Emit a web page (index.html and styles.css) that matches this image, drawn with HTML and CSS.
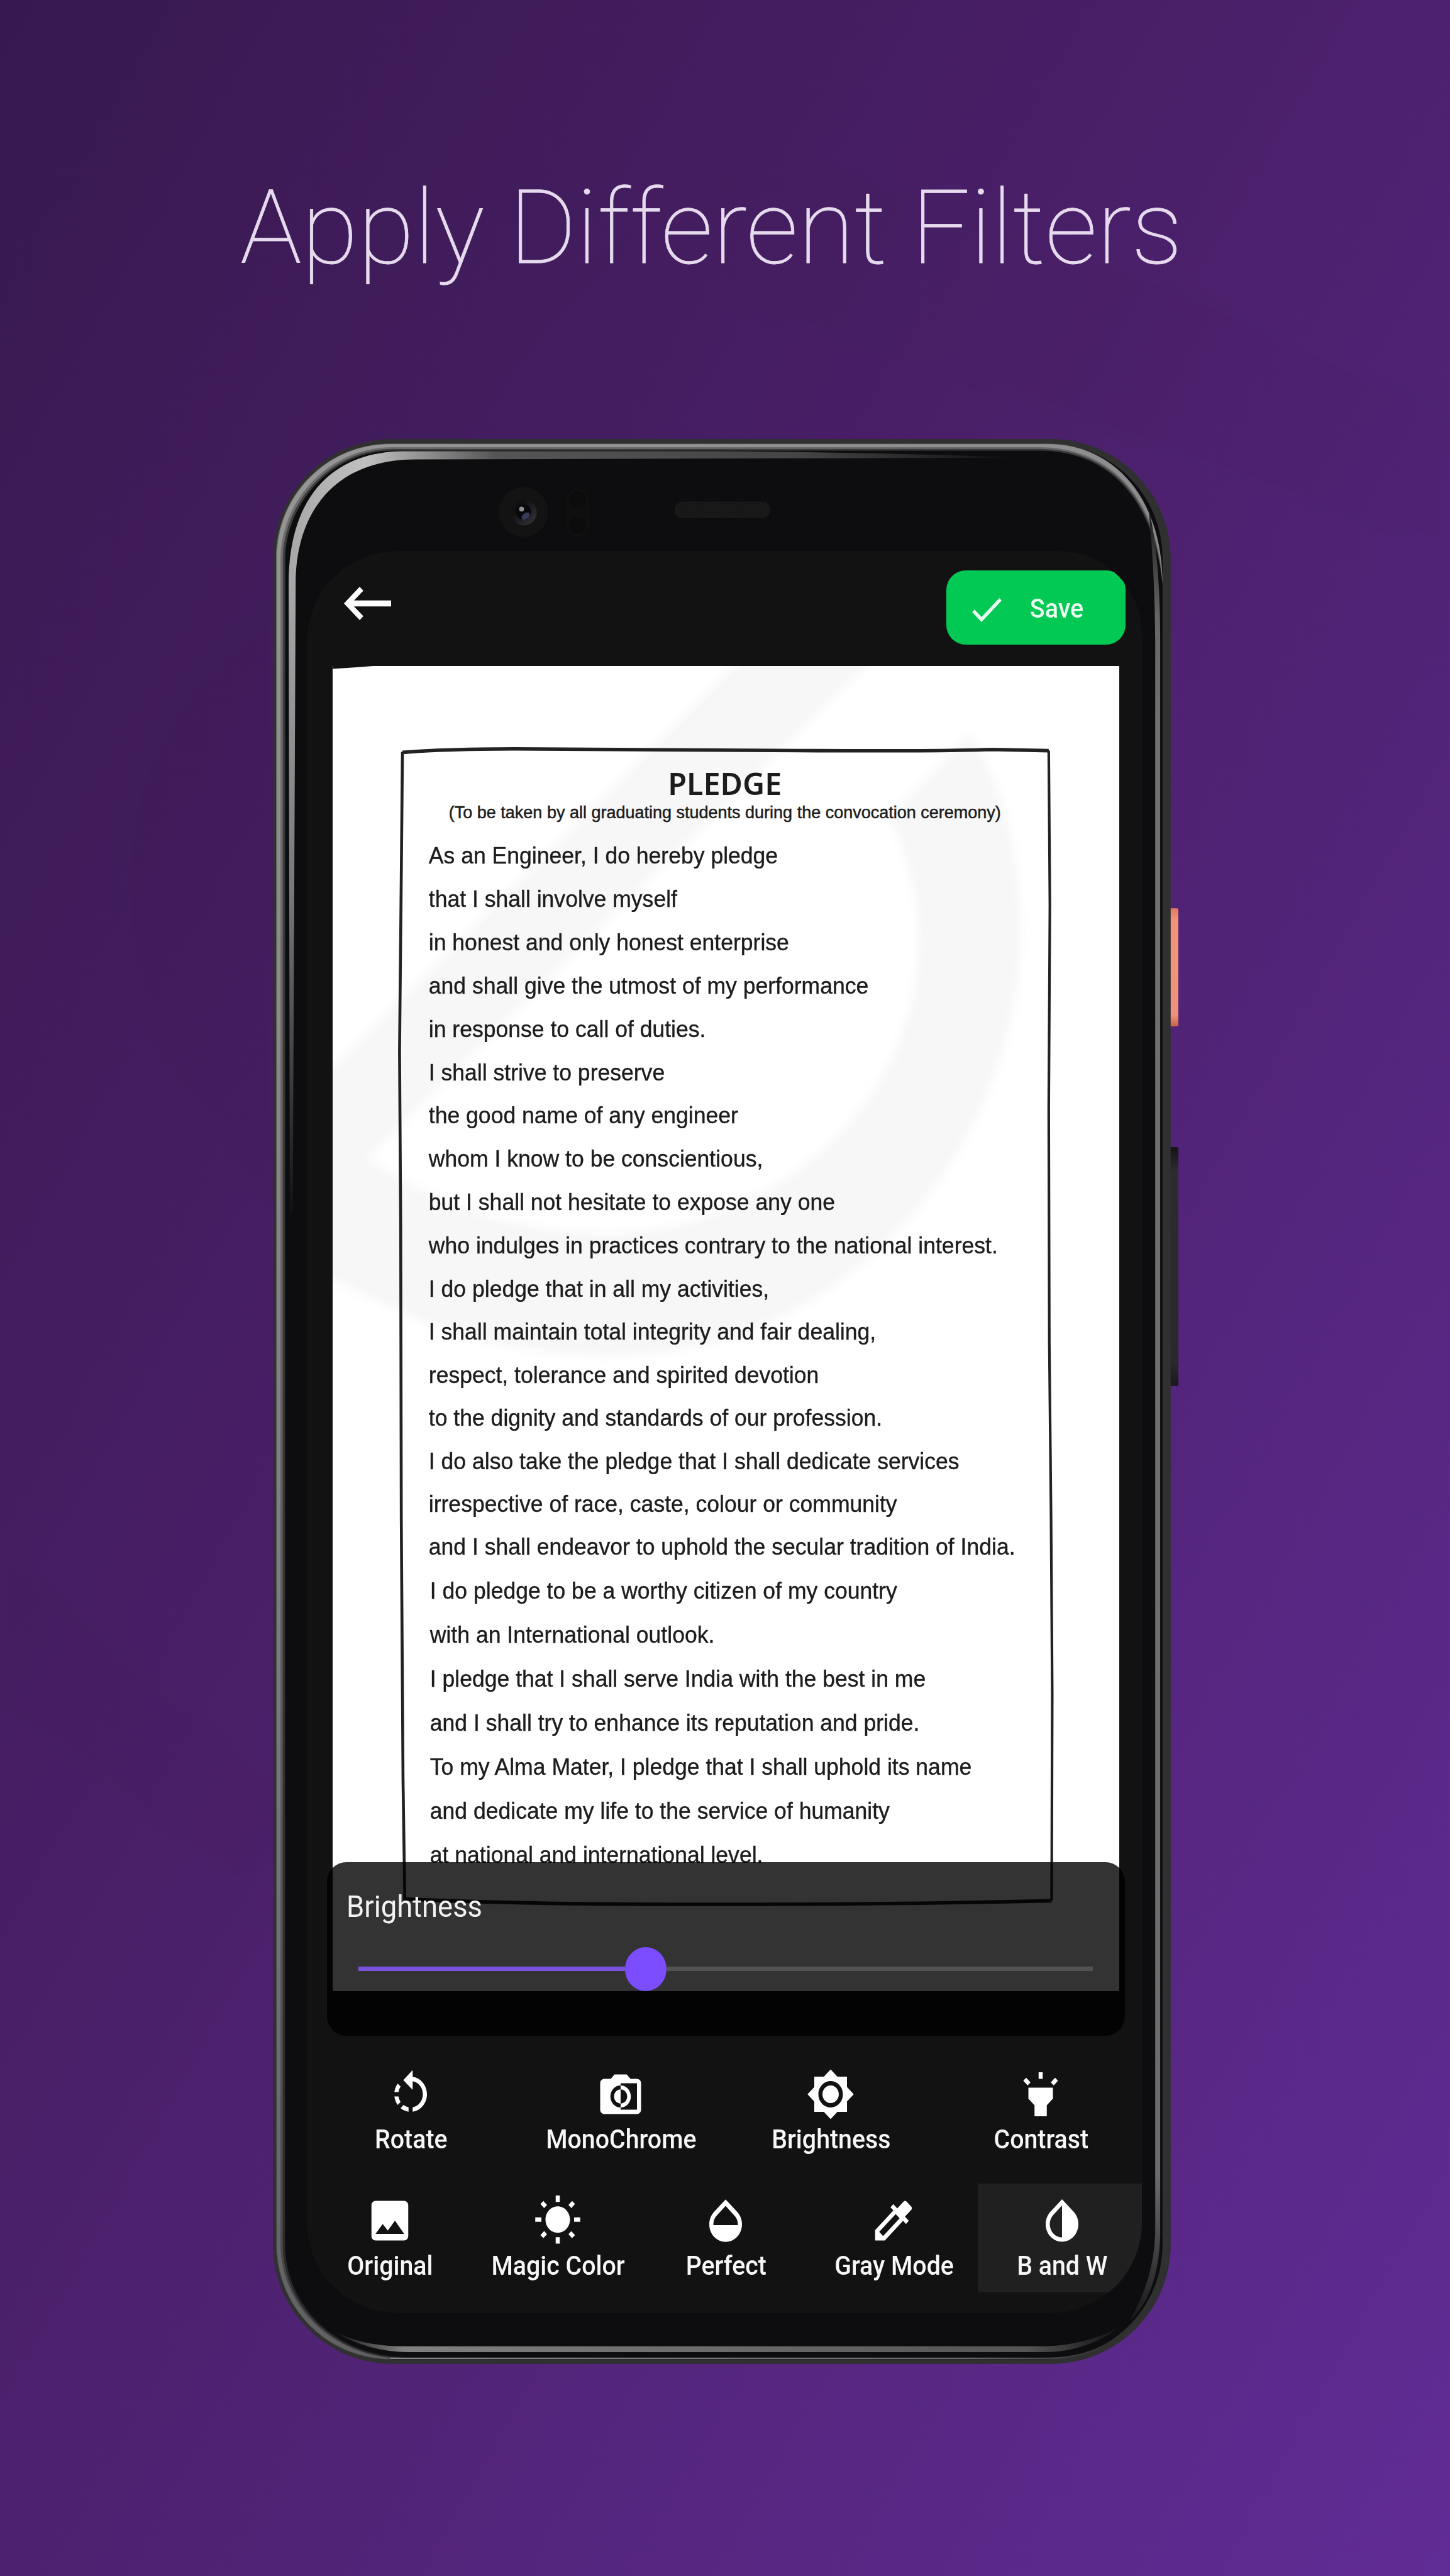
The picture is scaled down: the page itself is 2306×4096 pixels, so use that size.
FILE: index.html
```html
<!DOCTYPE html>
<html lang="en">
<head>
<meta charset="utf-8">
<title>Apply Different Filters</title>
<link rel="stylesheet" href="styles.css">
</head>
<body>
<svg class="backdrop" viewBox="0 0 883 1568" preserveAspectRatio="none" aria-hidden="true">
  <defs><filter id="haze"><feGaussianBlur stdDeviation="5"/></filter></defs>
  <g filter="url(#haze)">
    <path fill="#000" fill-opacity=".018" fill-rule="evenodd" d="M440 90L110 420C40 520 70 650 190 760V1100L150 1150L0 1040V940L170 1085V330Z"/>
    <path fill="#000" fill-opacity=".014" d="M440 90C600 110 760 190 883 250V335C720 290 560 210 400 180Z"/>
  </g>
</svg>
<h1 class="headline">Apply Different Filters</h1>

<main class="phone">
  <svg class="frame" viewBox="467 752 1552 3297" preserveAspectRatio="none" aria-hidden="true">
    <defs>
      <linearGradient id="rim" gradientUnits="userSpaceOnUse" x1="470" y1="900" x2="2000" y2="3900">
        <stop offset="0" stop-color="#fff" stop-opacity=".9"/>
        <stop offset=".5" stop-color="#fff" stop-opacity=".7"/>
        <stop offset="1" stop-color="#fff" stop-opacity=".4"/>
      </linearGradient>
      <linearGradient id="bottomLine" gradientUnits="userSpaceOnUse" x1="668" y1="0" x2="1900" y2="0">
        <stop offset="0" stop-color="#858585"/><stop offset=".8" stop-color="#666"/><stop offset="1" stop-color="#303030"/>
      </linearGradient>
      <linearGradient id="topBand" gradientUnits="userSpaceOnUse" x1="500" y1="0" x2="1750" y2="0">
        <stop offset="0" stop-color="#a8a8a8"/><stop offset=".1" stop-color="#c0c0c0"/>
        <stop offset=".28" stop-color="#555"/><stop offset=".7" stop-color="#444"/>
        <stop offset="1" stop-color="#0d0d0f"/>
      </linearGradient>
      <linearGradient id="leftBand" x1="0" y1="0" x2="0" y2="1">
        <stop offset="0" stop-color="#a8a8a8"/><stop offset=".5" stop-color="#777"/><stop offset="1" stop-color="#111"/>
      </linearGradient>
      <linearGradient id="rightBand" x1="0" y1="0" x2="0" y2="1">
        <stop offset="0" stop-color="#1a1a1a"/><stop offset=".06" stop-color="#666"/><stop offset=".12" stop-color="#707070"/>
        <stop offset=".92" stop-color="#6c6c6e"/><stop offset="1" stop-color="#18181a"/>
      </linearGradient>
      <linearGradient id="bottomBand" x1="0" y1="0" x2="1" y2="0">
        <stop offset="0" stop-color="#151515"/><stop offset=".09" stop-color="#808080"/>
        <stop offset=".88" stop-color="#555"/><stop offset="1" stop-color="#101012"/>
      </linearGradient>
      <linearGradient id="power" x1="0" y1="0" x2="0" y2="1">
        <stop offset="0" stop-color="#e27a62"/><stop offset=".1" stop-color="#f0937a"/>
        <stop offset=".9" stop-color="#ee937b"/><stop offset="1" stop-color="#c9624b"/>
      </linearGradient>
      <linearGradient id="volume" x1="0" y1="0" x2="0" y2="1">
        <stop offset="0" stop-color="#151515"/><stop offset=".1" stop-color="#2c2c2c"/>
        <stop offset=".9" stop-color="#292929"/><stop offset="1" stop-color="#191919"/>
      </linearGradient>
      <linearGradient id="lens" x1="0" y1="0" x2="1" y2="1">
        <stop offset=".3" stop-color="#101012"/><stop offset="1" stop-color="#36363d"/>
      </linearGradient>
      <pattern id="mesh" width="6" height="6" patternUnits="userSpaceOnUse">
        <rect width="6" height="6" fill="#1b1b1b"/><circle cx="1.5" cy="1.5" r="1.3" fill="#101010"/><circle cx="4.5" cy="4.5" r="1.3" fill="#101010"/>
      </pattern>
    </defs>
    <rect x="2000" y="1556" width="19" height="202" rx="4" fill="url(#power)"/>
    <rect x="2000" y="1965" width="19" height="409" rx="4" fill="url(#volume)"/>
    <rect x="467" y="752" width="1538" height="3297" rx="205" fill="#303030"/>
    <rect x="472.5" y="760" width="1518.5" height="3281" rx="196" fill="#0d0d0f"/>
    <g fill="url(#rim)">
      <path fill-opacity=".22" d="M1795 760H668C560 760 472.5 848 472.5 956V3845C472.5 3953 560 4041 668 4041L690 4037C576 4035 488 3950 488 3845V960C488 860 570 772 672 772H1780C1895 772 1975 850 1991 1000C1991 848 1903 760 1795 760Z"/>
      <path fill-opacity=".28" d="M1795 760H668C560 760 472.5 848 472.5 956V3845C472.5 3953 560 4041 668 4041L690 4039C572 4037 484 3950 484 3845V960C484 858 568 769 672 769H1780C1897 769 1979 850 1991 1000C1991 848 1903 760 1795 760Z"/>
      <path fill-opacity=".3" d="M1795 761H668C560 761 474 848 474 956V3845C474 3953 560 4040 668 4040L690 4040C570 4039 480 3950 480 3845V960C480 856 564 766 672 766H1780C1899 766 1983 850 1991 1000C1990 848 1903 761 1795 761Z"/>
    </g>
    <path fill="none" stroke="url(#bottomLine)" stroke-width="2.6" d="M668 4039.5H1795Q1850 4039 1890 4018"/>
    <path fill="url(#topBand)" d="M494 1000C494 850 570 774 690 773H1240Q1500 775 1765 784L1240 785.5L710 787C580 787 506 870 506 1000Z"/>
    <path fill="url(#leftBand)" d="M494 999H506L501 2080H496Z"/>
    <path fill="url(#rightBand)" d="M1967 870Q1987 950 1987 1100V3830Q1984 3930 1935 3975Q1978 3900 1978.5 3820V1100Q1978 980 1967 870Z"/>
    <path fill="url(#bottomBand)" d="M569 3992Q620 4019 690 4019H1790Q1860 4017 1920 3985Q1860 4029 1790 4029H700Q630 4029 569 3992Z"/>
    <circle cx="896" cy="877" r="42.5" fill="#131313"/>
    <circle cx="897" cy="878" r="22" fill="url(#lens)"/>
    <circle cx="896" cy="877" r="13" fill="#08080a"/>
    <ellipse cx="900" cy="884" rx="8" ry="5" fill="#343a58" transform="rotate(-35 900 884)"/>
    <circle cx="893" cy="872" r="4.2" fill="#8d8d8d"/>
    <rect x="971" y="838" width="36" height="80" rx="18" fill="#0f0f10" stroke="#141414"/>
    <circle cx="989" cy="855" r="14" fill="#0c0c0d"/><circle cx="989" cy="900" r="14" fill="#0c0c0d"/>
    <rect x="1156" y="860" width="162" height="27" rx="12" fill="url(#mesh)" stroke="#1c1c1c"/>
  </svg>

  <div class="screen">
    <header class="appbar">
      <svg class="back" viewBox="3 6 18 12" preserveAspectRatio="none" fill="#fff" role="img" aria-label="Back"><path d="M21 10.9H6.83l3.58-3.49L9 6l-6 6 6 6 1.41-1.41L6.83 13.1H21z"/></svg>
      <button class="save">
        <svg class="check" viewBox="3.4 5.6 17.6 13.4" preserveAspectRatio="none" fill="#e9fff0"><path d="M9 16.17L4.83 12l-1.42 1.41L9 19 21 7l-1.41-1.41z"/></svg>
        <span>Save</span>
      </button>
    </header>

    <section class="document">
      <svg class="paper" viewBox="569.4 1141 1347.4 2269.7" preserveAspectRatio="none" aria-hidden="true">
        <defs><filter id="soft" x="-10%" y="-10%" width="120%" height="120%"><feGaussianBlur stdDeviation="9"/></filter></defs>
        <g transform="translate(500 1141) scale(.9566)">
          <path fill="#f7f7f7" filter="url(#soft)" d="M830 -40L40 750V1080C250 1200 420 1242 600 1235C1000 1220 1300 860 1305 480C1305 330 1270 210 1215 120L1070 270C1110 360 1125 440 1120 520C1105 800 850 1010 570 1015C400 1015 250 960 135 880L1070 -40Z"/>
          <path fill="#121212" d="M73 0H145Q110 3 73 5Z"/>
        </g>
        <g fill="none" stroke="#222" stroke-linejoin="round">
          <path stroke-width="6" d="M689 1289Q760 1283 880 1283Q1150 1284 1400 1286Q1600 1287 1700 1284L1796 1286"/>
          <path stroke-width="5" d="M689 1288L687 1500L684 1800L686 2100L687 2600L690 3050L693 3255"/>
          <path stroke-width="4.5" d="M1796 1286L1798 1550L1796 1900L1797 2300L1800 2600L1802 2900L1801 3255"/>
          <path stroke-width="6" d="M693 3253Q900 3262 1150 3262Q1500 3263 1801 3256"/>
        </g>
      </svg>
      <div class="text">
        <h2>PLEDGE</h2>
        <p class="note">(To be taken by all graduating students during the convocation ceremony)</p>
        <div class="lines first">
          <p>As an Engineer, I do hereby pledge</p>
          <p>that I shall involve myself</p>
          <p>in honest and only honest enterprise</p>
          <p>and shall give the utmost of my performance</p>
          <p>in response to call of duties.</p>
          <p>I shall strive to preserve</p>
          <p>the good name of any engineer</p>
          <p>whom I know to be conscientious,</p>
          <p>but I shall not hesitate to expose any one</p>
          <p>who indulges in practices contrary to the national interest.</p>
        </div>
        <div class="lines middle">
          <p>I do pledge that in all my activities,</p>
          <p>I shall maintain total integrity and fair dealing,</p>
          <p>respect, tolerance and spirited devotion</p>
          <p>to the dignity and standards of our profession.</p>
          <p>I do also take the pledge that I shall dedicate services</p>
          <p>irrespective of race, caste, colour or community</p>
          <p>and I shall endeavor to uphold the secular tradition of India.</p>
        </div>
        <div class="lines last">
          <p>I do pledge to be a worthy citizen of my country</p>
          <p>with an International outlook.</p>
          <p>I pledge that I shall serve India with the best in me</p>
          <p>and I shall try to enhance its reputation and pride.</p>
          <p>To my Alma Mater, I pledge that I shall uphold its name</p>
          <p>and dedicate my life to the service of humanity</p>
          <p>at national and international level.</p>
        </div>
      </div>
    </section>

    <section class="panel">
      <span class="panel-title">Brightness</span>
      <div class="slider"><div class="fill"></div><div class="thumb"></div><div class="rest"></div></div>
    </section>

    <nav class="tools">
      <div class="row adjust">
        <div class="tool"><svg viewBox="0 0 24 24" preserveAspectRatio="none"><path d="M7.11 8.53L5.7 7.11C4.8 8.27 4.24 9.61 4.07 11h2.02c.14-.87.49-1.72 1.02-2.47zM6.09 13H4.07c.17 1.39.72 2.73 1.62 3.89l1.41-1.42c-.52-.75-.87-1.59-1.01-2.47zm1.01 5.32c1.16.9 2.51 1.44 3.9 1.61V17.9c-.87-.15-1.71-.49-2.46-1.03L7.1 18.32zM13 4.07V1L8.45 5.55 13 10V6.09c2.84.48 5 2.94 5 5.91s-2.16 5.43-5 5.91v2.02c3.95-.49 7-3.85 7-7.93s-3.05-7.44-7-7.93z"/></svg><span>Rotate</span></div>
        <div class="tool"><svg viewBox="0 0 24 24" preserveAspectRatio="none"><path d="M20 5h-3.2L15 3H9L7.2 5H4c-1.1 0-2 .9-2 2v12c0 1.1.9 2 2 2h16c1.1 0 2-.9 2-2V7c0-1.1-.9-2-2-2zm0 14h-8v-1c-2.8 0-5-2.2-5-5s2.2-5 5-5V7h8v12zm-3-6c0-2.8-2.2-5-5-5v1.8c1.8 0 3.2 1.4 3.2 3.2s-1.4 3.2-3.2 3.2V18c2.8 0 5-2.2 5-5zm-8.2 0c0 1.8 1.4 3.2 3.2 3.2V9.8c-1.8 0-3.2 1.4-3.2 3.2z"/></svg><span>MonoChrome</span></div>
        <div class="tool"><svg viewBox="0 0 24 24" preserveAspectRatio="none"><path d="M20 8.69V4h-4.69L12 .69 8.69 4H4v4.69L.69 12 4 15.31V20h4.69L12 23.31 15.31 20H20v-4.69L23.31 12 20 8.69zM12 18c-3.31 0-6-2.69-6-6s2.69-6 6-6 6 2.69 6 6-2.69 6-6 6zm0-10c-2.21 0-4 1.79-4 4s1.79 4 4 4 4-1.79 4-4-1.79-4-4-4z"/></svg><span>Brightness</span></div>
        <div class="tool"><svg viewBox="0 0 24 24" preserveAspectRatio="none"><path d="M6 14l3 3v5h6v-5l3-3V9H6v5zm5-12h2v3h-2V2zM3.5 5.88l1.41-1.41 2.12 2.12L5.62 8 3.5 5.88zm13.46.71l2.12-2.12 1.41 1.41L18.38 8l-1.42-1.41z"/></svg><span>Contrast</span></div>
      </div>
      <div class="row filters">
        <div class="tool"><svg viewBox="0 0 24 24" preserveAspectRatio="none"><path d="M21 19V5c0-1.1-.9-2-2-2H5c-1.1 0-2 .9-2 2v14c0 1.1.9 2 2 2h14c1.1 0 2-.9 2-2zM8.5 13.5l2.5 3.01L14.5 12l4.5 6H5l3.5-4.5z"/></svg><span>Original</span></div>
        <div class="tool"><svg viewBox="0 0 24 24" preserveAspectRatio="none"><path d="M6.76 4.84l-1.8-1.79-1.41 1.41 1.79 1.79 1.42-1.41zM4 10.5H1v2h3v-2zm9-9.95h-2V3.5h2V.55zm7.45 3.91l-1.41-1.41-1.79 1.79 1.41 1.41 1.79-1.79zm-3.21 13.7l1.79 1.8 1.41-1.41-1.8-1.79-1.4 1.4zM20 10.5v2h3v-2h-3zm-8-5c-3.31 0-6 2.69-6 6s2.69 6 6 6 6-2.69 6-6-2.69-6-6-6zm-1 16.95h2V19.5h-2v2.95zm-7.45-3.91l1.41 1.41 1.79-1.8-1.41-1.41-1.79 1.8z"/></svg><span>Magic Color</span></div>
        <div class="tool"><svg viewBox="0 0 24 24" preserveAspectRatio="none"><path d="M17.66 8L12 2.35 6.34 8C4.78 9.56 4 11.64 4 13.64s.78 4.11 2.34 5.67 3.61 2.35 5.66 2.35 4.1-.79 5.66-2.35S20 15.64 20 13.64 19.22 9.56 17.66 8zM6 14c.01-2 .62-3.27 1.76-4.4L12 5.27l4.24 4.38C17.38 10.77 17.99 12 18 14H6z"/></svg><span>Perfect</span></div>
        <div class="tool"><svg viewBox="0 0 24 24" preserveAspectRatio="none"><path d="M20.71 5.63l-2.34-2.34c-.39-.39-1.02-.39-1.41 0l-3.12 3.12-1.93-1.91-1.41 1.41 1.42 1.42L3 16.25V21h4.75l8.92-8.92 1.42 1.42 1.41-1.41-1.92-1.92 3.12-3.12c.4-.4.4-1.03.01-1.42zM6.92 19L5 17.08l8.06-8.06 1.92 1.92L6.92 19z"/></svg><span>Gray Mode</span></div>
        <div class="tool selected"><svg viewBox="0 0 24 24" preserveAspectRatio="none"><path d="M17.66 7.93L12 2.27 6.34 7.93c-3.12 3.12-3.12 8.19 0 11.31C7.9 20.8 9.95 21.58 12 21.58c2.05 0 4.1-.78 5.66-2.34 3.12-3.12 3.12-8.19 0-11.31zM12 19.59c-1.6 0-3.11-.62-4.24-1.76C6.62 16.69 6 15.19 6 13.59s.62-3.11 1.76-4.24L12 5.1v14.49z"/></svg><span>B and W</span></div>
      </div>
    </nav>
  </div>
</main>
</body>
</html>
```

FILE: styles.css
```css
* { box-sizing: border-box; margin: 0; padding: 0; }

body {
  position: relative;
  width: 2306px;
  height: 4096px;
  overflow: hidden;
  background: linear-gradient(to bottom right, #38194f 0%, #4b206b 45%, #602c95 100%);
  font-family: Roboto, "Liberation Sans", sans-serif;
  color: #fff;
}

.backdrop { position: absolute; inset: 0; width: 100%; height: 100%; }

.headline {
  position: relative;
  height: 698px;
  padding: 264.5px 0 0 382px;
  font-size: 163.5px;
  line-height: 194px;
  font-weight: 100;
  white-space: nowrap;
  color: #e6daee;
  -webkit-text-stroke: .8px #e6daee;
}

.phone {
  position: relative;
  width: 1440.8px;
  height: 3060.7px;
  margin-left: 433.5px;
  padding: 178.3px 71.4px 81px 54.3px;
}

.frame { position: absolute; inset: 0; width: 100%; height: 100%; }

.screen {
  position: relative;
  display: flex;
  flex-direction: column;
  width: 1328px;
  height: 2802px;
  border-radius: 144px;
  border-top-right-radius: 132px;
  overflow: hidden;
  background: #121212;
}

.appbar {
  flex: none;
  display: flex;
  justify-content: space-between;
  align-items: flex-start;
  height: 183px;
  padding: 31px 26px 0 59px;
}

.back { width: 75px; height: 53px; margin-top: 26px; }

.save {
  display: flex;
  align-items: center;
  gap: 45px;
  width: 285px;
  height: 118px;
  padding: 4px 0 0 41px;
  border: 0;
  border-radius: 31px;
  background: #02c854;
  color: #e9fff0;
  font: 500 39.5px/50px Roboto, sans-serif;
}
.save span { transform: scaleY(1.07); }
.check { width: 47px; height: 38px; margin-top: 4px; }

.document {
  flex: none;
  position: relative;
  width: 1251px;
  height: 2107px;
  margin-left: 41px;
  overflow: hidden;
  background: #fff;
  color: #1c1c1c;
  font-family: "Liberation Sans", Arial, sans-serif;
}
.paper { position: absolute; inset: 0; width: 100%; height: 100%; }
.text { position: relative; padding: 156px 0 0 153px; white-space: nowrap; }
.text h2 {
  width: 942px;
  text-align: center;
  font: 600 48.5px/60px "Noto Sans", sans-serif;
}
.note {
  width: 942px;
  margin-bottom: 17px;
  text-align: center;
  font-size: 27px;
  line-height: 34px;
  -webkit-text-stroke: .5px #1c1c1c;
}
.lines { font-size: 35.55px; -webkit-text-stroke: .4px #1c1c1c; }
.lines p { transform: scaleY(1.05); }
.first { line-height: 68.85px; }
.middle { line-height: 68.46px; }
.last { line-height: 70px; padding-left: 2px; }

.panel {
  position: absolute;
  left: 32.2px;
  top: 2084.4px;
  width: 1269px;
  height: 276.5px;
  padding: 43px 51px 0 31px;
  border-radius: 31px;
  background: rgba(0, 0, 0, .8);
}
.panel-title {
  display: block;
  font-size: 45.4px;
  line-height: 56px;
  color: #f2f2f2;
  transform: scaleY(1.07);
}
.slider {
  display: flex;
  align-items: center;
  height: 70px;
  margin: 36px 0 0 19px;
}
.fill { width: 424px; height: 7px; background: #7a52e0; }
.thumb { width: 66px; height: 70px; border-radius: 50%; background: #7c4dff; }
.rest { flex: 1; height: 7px; background: #525252; }

.tools {
  flex: none;
  display: flex;
  flex-direction: column;
  gap: 28px;
  width: 1336px;
  margin: 105px 0 0 -1.5px;
}
.row { display: grid; height: 173px; }
.adjust { grid-template-columns: repeat(4, 1fr); }
.filters { grid-template-columns: repeat(5, 1fr); }
.tool {
  display: flex;
  flex-direction: column;
  align-items: center;
  padding-top: 16.5px;
  font-size: 39.3px;
  line-height: 50px;
  font-weight: 500;
  white-space: nowrap;
}
.tool svg { width: 78px; height: 84px; fill: #fff; }
.tool span { margin: 5px 0 0 1px; color: #f7f7f7; transform: scaleY(1.07); }
.selected { background: #202020; }
```
